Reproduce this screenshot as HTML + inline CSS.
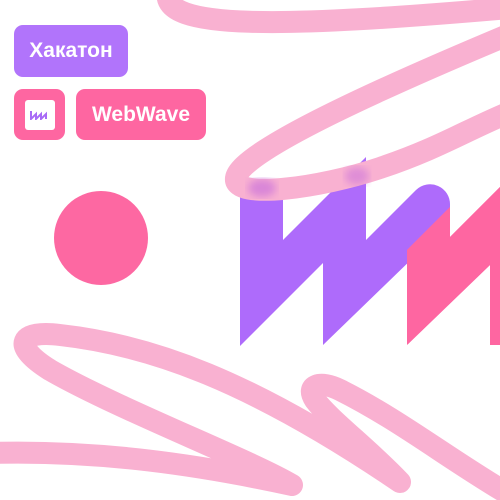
<!DOCTYPE html>
<html><head><style>
html,body{margin:0;padding:0;background:#fff;width:500px;height:500px;overflow:hidden;position:relative;font-family:"Liberation Sans",sans-serif}
.b{position:absolute;border-radius:9px;color:#fff;font-weight:bold;font-size:21px;display:flex;align-items:center;justify-content:center}
</style></head><body>
<svg width="500" height="500" style="position:absolute;left:0;top:0">
<defs><filter id="bl"><feGaussianBlur stdDeviation="4"/></filter></defs>
<circle cx="101" cy="238" r="47" fill="#fd68a2"/>
<path d="M240,196 L283,196 L283,240 L366,157 L366,240 L416,190 A20,20 0 0 1 450,205 L450,222 L323,345 L323,263 L240,346 Z" fill="#ae6bfb"/>
<polygon points="407,344 407,250 450,207 450,237 500,187 500,255 490,265 490,344 407,344 407,344" fill="#fe66a1"/>
<polygon points="407,345 490,265 490,345" fill="#fff"/>
<polygon points="407,345 407,250 450,207 450,237 500,187 500,345 490,345 490,265" fill="#fe66a1"/>
<polygon points="407,346 490,266 490,346" fill="#fff"/>
<g fill="none" stroke="#f9b1d1" stroke-width="22" stroke-linecap="round" stroke-linejoin="round">
<path d="M168,-8 C160,30 280,28 510,8"/>
<path d="M515,32 C400,80 240,150 236,178 C233,200 320,188 380,168 S470,128 515,110"/>
<path d="M-10,453 C100,450 200,465 292,485 C250,460 120,410 50,370 C10,345 20,330 60,335 C150,345 250,380 400,482 C370,450 330,420 315,400 C305,385 320,380 340,390 C400,420 450,460 510,495"/>
</g>
<ellipse cx="262" cy="188" rx="14" ry="9" fill="#c56bdc" opacity=".6" filter="url(#bl)"/>
<ellipse cx="357" cy="176" rx="12" ry="9" fill="#c56bdc" opacity=".5" filter="url(#bl)"/>
</svg>
<div class="b" style="left:14px;top:25px;width:114px;height:52px;background:#b174fb">Хакатон</div>
<div class="b" style="left:14px;top:89px;width:51px;height:51px;background:#fe66a1"><div style="width:30px;height:30px;background:#fff;border-radius:3px;display:flex;align-items:center;justify-content:center"><svg width="20" height="10"><path d="M1,1 L1,9 L6,4 L6,9 L11,4 L11,9 L16,4 L16,9" fill="none" stroke="#a86bf6" stroke-width="2"/></svg></div></div>
<div class="b" style="left:76px;top:89px;width:130px;height:51px;background:#fe66a1">WebWave</div>
</body></html>
